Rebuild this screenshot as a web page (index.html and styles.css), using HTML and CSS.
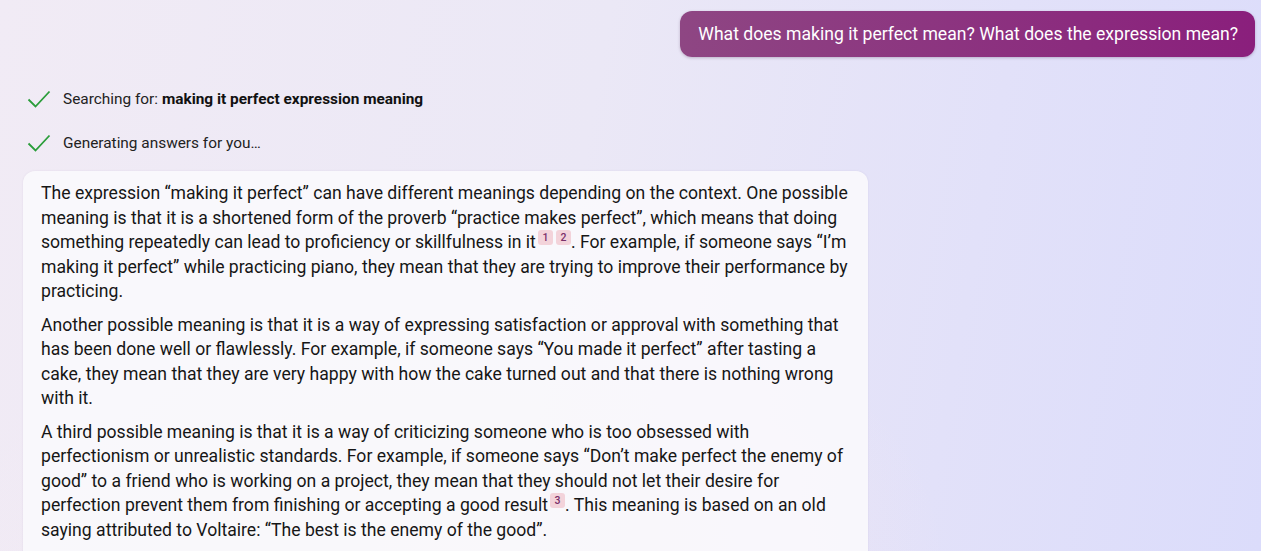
FILE: index.html
```html
<!DOCTYPE html>
<html lang="en">
<head>
  <meta charset="UTF-8">
  <title>Chat</title>
  <link rel="stylesheet" href="styles.css">
</head>
<body>
  <div class="chat">
    <div class="user-row">
      <div class="user-msg">What does making it perfect mean? What does the expression mean?</div>
    </div>

    <div class="status first">
      <svg class="check" width="24" height="18" viewBox="0 0 24 18"><path d="M1.5 9.5 L8.5 16.5 L22.5 1.5" fill="none" stroke="#2a9d3a" stroke-width="1.8"/></svg>
      <span>Searching for: <b>making it perfect expression meaning</b></span>
    </div>
    <div class="status">
      <svg class="check" width="24" height="18" viewBox="0 0 24 18"><path d="M1.5 9.5 L8.5 16.5 L22.5 1.5" fill="none" stroke="#2a9d3a" stroke-width="1.8"/></svg>
      <span>Generating answers for you…</span>
    </div>

    <div class="answer">
      <p>The expression “making it perfect” can have different meanings depending on the context. One possible meaning is that it is a shortened form of the proverb “practice makes perfect”, which means that doing something repeatedly can lead to proficiency or skillfulness in it<span class="cite">1</span><span class="cite">2</span>. For example, if someone says “I’m making it perfect” while practicing piano, they mean that they are trying to improve their performance by practicing.</p>
      <p>Another possible meaning is that it is a way of expressing satisfaction or approval with something that has been done well or flawlessly. For example, if someone says “You made it perfect” after tasting a cake, they mean that they are very happy with how the cake turned out and that there is nothing wrong with it.</p>
      <p>A third possible meaning is that it is a way of criticizing someone who is too obsessed with perfectionism or unrealistic standards. For example, if someone says “Don’t make perfect the enemy of good” to a friend who is working on a project, they mean that they should not let their desire for perfection prevent them from finishing or accepting a good result<span class="cite">3</span>. This meaning is based on an old saying attributed to Voltaire: “The best is the enemy of the good”.</p>
    </div>
  </div>
</body>
</html>
```

FILE: styles.css
```css
* {
  margin: 0;
  padding: 0;
  box-sizing: border-box;
}

html, body {
  height: 100%;
}

body {
  font-family: Roboto, "Liberation Sans", sans-serif;
  color: #111;
  overflow: hidden;
  background:
    radial-gradient(ellipse 500px 300px at 450px 560px, rgba(246, 232, 238, 0.8), rgba(246, 232, 238, 0) 100%),
    linear-gradient(100deg, #f1ebf5 0%, #ebe8f6 45%, #e2e1f9 75%, #dbdcfb 100%);
}

.chat {
  padding: 11px 6px 0 23px;
}

.user-row {
  display: flex;
  justify-content: flex-end;
}

.user-msg {
  background: linear-gradient(90deg, #8e4683 0%, #8b2b7e 70%, #8a1f7c 100%);
  color: #fff;
  font-size: 17.6px;
  line-height: 20px;
  padding: 13px 17px 13px 18px;
  border-radius: 12px;
  box-shadow: 0 1px 3px rgba(60, 20, 60, 0.25);
}

.status {
  display: flex;
  align-items: center;
  gap: 12px;
  font-size: 15.4px;
  color: #222;
  padding-left: 4px;
  height: 20px;
  margin-top: 24px;
}

.status.first {
  margin-top: 32px;
}

.status b {
  font-weight: 700;
  color: #111;
}

.check {
  flex: none;
}

.answer {
  margin-top: 18px;
  width: 845px;
  background: rgba(250, 249, 252, 0.92);
  border-radius: 12px 12px 0 0;
  padding: 10px 14px 20px 18px;
  font-size: 17.6px;
  line-height: 24.5px;
  color: #161616;
  box-shadow: 0 0 2px rgba(100, 90, 130, 0.12);
}

.answer p {
  margin-bottom: 9px;
}

.cite {
  display: inline-block;
  position: relative;
  top: -7px;
  font-size: 10.5px;
  font-weight: 500;
  line-height: 15px;
  height: 15px;
  min-width: 15px;
  padding: 0 3px;
  margin: 0 0 0 2px;
  text-align: center;
  color: #7a2f6a;
  background: #f3d3da;
  border-radius: 3px;
}

.cite + .cite {
  margin-left: 3px;
}
```
